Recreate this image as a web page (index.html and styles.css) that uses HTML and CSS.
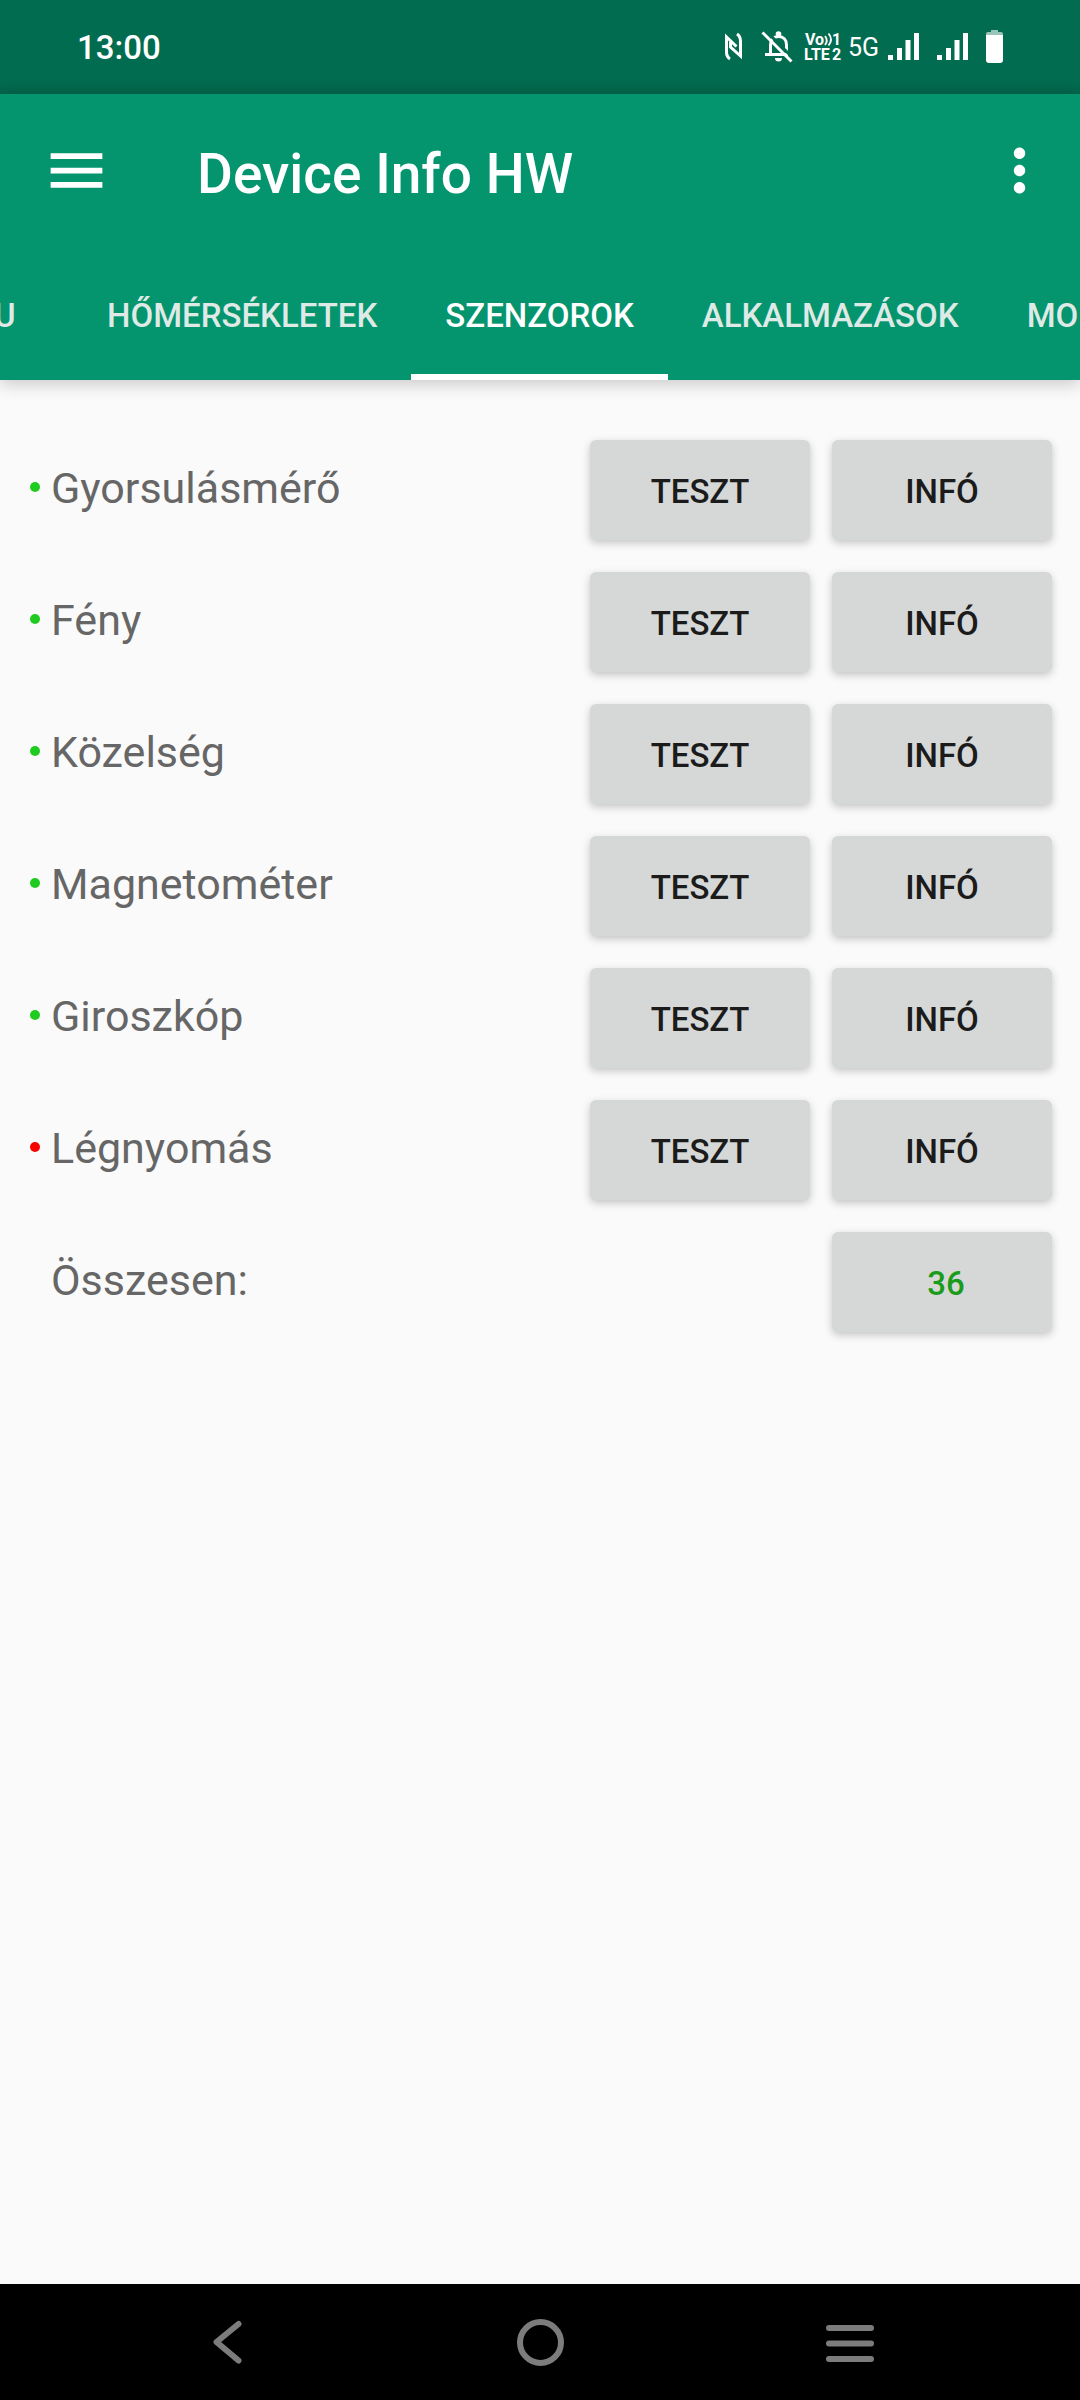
FILE: index.html
```html
<!DOCTYPE html>
<html lang="hu">
<head>
    <meta charset="UTF-8">
    <meta name="viewport" content="width=device-width, initial-scale=1.0">
    <title>Device Info HW</title>
    <link rel="stylesheet" href="styles.css">
</head>
<body>

    <div class="status-bar">
        <span class="clock">13:00</span>
        <svg class="status-icons" width="280" height="36" viewBox="724 29 280 36" fill="#fff">
            <!-- nfc -->
            <g fill="none" stroke="#fff" stroke-width="3">
                <path d="M730 59c-3-2-3.500-4-3.500-7V37l10 9.500"/>
                <path d="M737 34c3 2 3.500 4 3.500 7v15L730.500 47v-5"/>
            </g>
            <!-- muted bell -->
            <g fill="none" stroke="#fff" stroke-width="3">
                <path d="M765 54.500h23M770.500 54V45c0-5 3-8.500 8-8.500s8 3.500 8 8.500v6"/>
                <path stroke="#026c50" stroke-width="3" d="M765 30l29 29"/>
                <path d="M762.500 32.500l29 29"/>
            </g>
            <circle cx="778.500" cy="34" r="2.800"/>
            <path d="M775 58h7a3.500 3.500 0 0 1-7 0z"/>
            <!-- volte -->
            <text class="volte" x="805" y="45">Vo</text>
            <text class="volte" x="832" y="45">1</text>
            <text class="volte" x="804" y="60">LTE</text>
            <text class="volte" x="832" y="60">2</text>
            <path d="M825 36q3.500 4.500 0 9M828.500 33.500q5 6 0 12" fill="none" stroke="#fff" stroke-width="1.800"/>
            <text class="network" x="848" y="56">5G</text>
            <!-- signal, both sims -->
            <path d="M888 55h5v5h-5zM897 48h5v12h-5zM905.500 40h5v20h-5zM914 33h5v27h-5z"/>
            <path d="M937 55h5v5h-5zM946 48h5v12h-5zM954.500 40h5v20h-5zM963 33h5v27h-5z"/>
            <!-- battery -->
            <path opacity=".6" d="M986 35v-1q0-2 2-2h3v-2h7v2h3q2 0 2 2v1z"/>
            <path d="M986 35h17v25q0 3-3 3h-11q-3 0-3-3z"/>
        </svg>
    </div>

    <header class="header">
        <div class="toolbar">
            <button class="icon-btn" aria-label="Menü">
                <svg width="69" height="69" viewBox="0 0 24 24" fill="#fff">
                    <path d="M3 18h18v-2H3v2zm0-5h18v-2H3v2zm0-7v2h18V6H3z"/>
                </svg>
            </button>
            <h1 class="title">Device Info HW</h1>
            <button class="icon-btn" aria-label="Továbbiak">
                <svg width="69" height="69" viewBox="0 0 24 24" fill="#fff">
                    <path d="M12 8c1.100 0 2-.900 2-2s-.900-2-2-2-2 .900-2 2 .900 2 2 2zm0 2c-1.100 0-2 .900-2 2s.900 2 2 2 2-.900 2-2-.900-2-2-2zm0 6c-1.100 0-2 .900-2 2s.900 2 2 2 2-.900 2-2-.900-2-2-2z"/>
                </svg>
            </button>
        </div>
        <nav class="tabs">
            <a class="tab" href="#">AKKU</a>
            <a class="tab" href="#">HŐMÉRSÉKLETEK</a>
            <a class="tab active" href="#">SZENZOROK</a>
            <a class="tab" href="#">ALKALMAZÁSOK</a>
            <a class="tab" href="#">MODULOK</a>
        </nav>
    </header>

    <main class="sensors">
        <div class="row">
            <span class="dot"></span>
            <span class="name">Gyorsulásmérő</span>
            <button class="btn">TESZT</button>
            <button class="btn">INFÓ</button>
        </div>
        <div class="row">
            <span class="dot"></span>
            <span class="name">Fény</span>
            <button class="btn">TESZT</button>
            <button class="btn">INFÓ</button>
        </div>
        <div class="row">
            <span class="dot"></span>
            <span class="name">Közelség</span>
            <button class="btn">TESZT</button>
            <button class="btn">INFÓ</button>
        </div>
        <div class="row">
            <span class="dot"></span>
            <span class="name">Magnetométer</span>
            <button class="btn">TESZT</button>
            <button class="btn">INFÓ</button>
        </div>
        <div class="row">
            <span class="dot"></span>
            <span class="name">Giroszkóp</span>
            <button class="btn">TESZT</button>
            <button class="btn">INFÓ</button>
        </div>
        <div class="row">
            <span class="dot missing"></span>
            <span class="name">Légnyomás</span>
            <button class="btn">TESZT</button>
            <button class="btn">INFÓ</button>
        </div>
        <div class="row">
            <span class="dot none"></span>
            <span class="name">Összesen:</span>
            <button class="btn total">&nbsp;36</button>
        </div>
    </main>

    <div class="nav-bar">
        <button class="nav-btn" aria-label="Vissza">
            <svg width="96" height="60" viewBox="0 0 96 60">
                <path d="M58.500 12L36.500 30l22 18.500"/>
            </svg>
        </button>
        <button class="nav-btn" aria-label="Kezdőképernyő">
            <svg width="96" height="60" viewBox="0 0 96 60">
                <circle cx="48.500" cy="30.500" r="20.500"/>
            </svg>
        </button>
        <button class="nav-btn" aria-label="Legutóbbiak">
            <svg width="96" height="60" viewBox="0 0 96 60">
                <path d="M25 16h42M25 31.500h42M25 47h42"/>
            </svg>
        </button>
    </div>

</body>
</html>
```
FILE: styles.css
```css
* {
    box-sizing: border-box;
}
body {
    margin: 0;
    min-height: 100vh;
    display: flex;
    flex-direction: column;
    background: #fafafa;
    font-family: Roboto, sans-serif;
    overflow-x: hidden;
}
button {
    border: none;
    padding: 0;
    font-family: inherit;
    cursor: pointer;
}
svg {
    display: block;
}

.status-bar {
    height: 94px;
    padding: 0 76px 0 77px;
    display: flex;
    align-items: center;
    justify-content: space-between;
    background: linear-gradient(#026c50 80px, #03644a);
    color: #fff;
}
.clock {
    padding-top: 2px;
    font-size: 33px;
    font-weight: 500;
    line-height: 40px;
}
.volte {
    font-size: 16px;
    font-weight: 700;
}
.network {
    font-size: 25px;
}

.header {
    background: #04946e;
    color: #fff;
    box-shadow: 0 4px 16px rgba(0, 0, 0, 0.2);
}
.toolbar {
    height: 160px;
    padding: 0 26px 8px 42px;
    display: flex;
    align-items: center;
}
.icon-btn {
    background: none;
}
.title {
    flex: 1;
    margin: 0;
    padding: 8px 0 0 86px;
    font-size: 55px;
    font-weight: 500;
    line-height: 64px;
}
.tabs {
    display: flex;
    height: 126px;
    margin-left: -127px;
    overflow: hidden;
}
.tab {
    flex: none;
    display: flex;
    align-items: center;
    justify-content: center;
    min-width: 200px;
    padding: 0 34px 4px;
    border-top: 6px solid transparent;
    border-bottom: 6px solid transparent;
    color: #dfe9e5;
    font-size: 33px;
    font-weight: 500;
    text-decoration: none;
}
.tab.active {
    color: #fff;
    border-bottom-color: #fff;
}

.sensors {
    flex: 1;
    display: flex;
    flex-direction: column;
    gap: 32px;
    padding: 60px 28px 60px 30px;
}
.row {
    display: flex;
    align-items: center;
    height: 100px;
}
.dot {
    width: 10px;
    height: 10px;
    margin-bottom: 6px;
    border-radius: 50%;
    background: #1ecb1e;
}
.dot.missing {
    background: #f80000;
}
.dot.none {
    visibility: hidden;
}
.name {
    flex: 1;
    padding-left: 11px;
    padding-bottom: 4px;
    color: #666;
    font-size: 43px;
    line-height: 50px;
}
.btn {
    width: 220px;
    height: 100px;
    margin-left: 22px;
    padding-top: 4px;
    border-radius: 6px;
    background: #d6d8d7;
    box-shadow: 0 3px 8px rgba(0, 0, 0, 0.22);
    color: #1b1b1b;
    font-size: 33px;
    font-weight: 500;
    line-height: 40px;
}
.btn.total {
    color: #1a9c1a;
}

.nav-bar {
    height: 116px;
    padding: 0 180px;
    display: flex;
    align-items: center;
    justify-content: space-between;
    background: #000;
}
.nav-btn {
    background: none;
}
.nav-btn svg {
    fill: none;
    stroke: #7c7c7c;
    stroke-width: 6;
    stroke-linecap: round;
    stroke-linejoin: round;
}
```
